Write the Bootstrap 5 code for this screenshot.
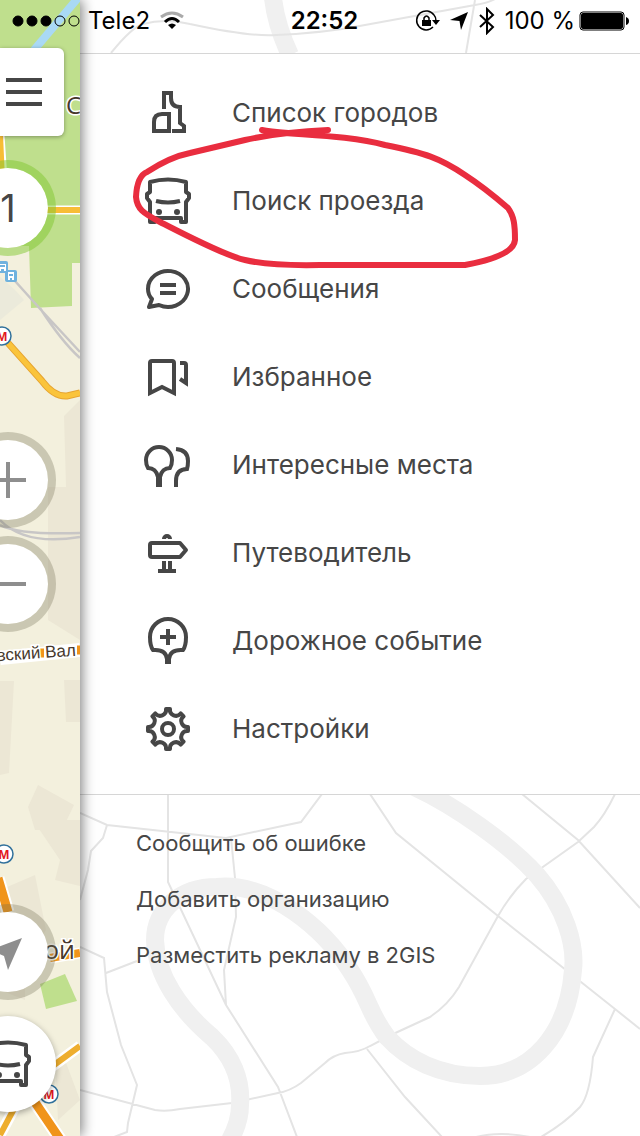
<!DOCTYPE html>
<html lang="ru">
<head>
<meta charset="utf-8">
<meta name="viewport" content="width=device-width, initial-scale=1">
<title>2GIS</title>
<link href="https://cdn.jsdelivr.net/npm/bootstrap@5.3.0/dist/css/bootstrap.min.css" rel="stylesheet">
<style>
  body { font-family: Inter, "Liberation Sans", sans-serif; color: #464646; background: #fff; }
  a { color: inherit; text-decoration: none; }
  .ink { fill: none; stroke: #464646; stroke-width: 4; }

  .status-bar { height: 42px; padding: 0 11px 0 12px; color: #000; font-size: 24px; line-height: 42px; z-index: 3; }
  .status-side { flex: 1 1 0; }
  .status-time { font-weight: 600; padding-left: 8px; }

  .map-strip { width: 80px; z-index: 2; padding: 48px 0 24px; background: #f3f0dd; box-shadow: 2px 0 12px rgba(0,0,0,.5); }
  .map-clip { inset: 0; }
  .map-control { position: relative; border: 0; background: #fff; padding: 0; display: flex; align-items: center; justify-content: center; }
  .menu-btn { width: 64px; height: 88px; border-radius: 0 6px 6px 0; box-shadow: 0 1px 4px rgba(0,0,0,.35); }
  .round-btn { width: 96px; height: 96px; margin-left: -40px; border-radius: 50%; border: 8px solid rgba(110,105,80,.3); background-clip: padding-box; }
  .round-btn.compass { border-color: rgba(130,200,50,.5); margin-top: 24px; font-size: 38px; color: #464646; }
  .round-btn.transit { border: 0; box-shadow: 0 2px 6px rgba(0,0,0,.35); }
  .zoom-group { margin-top: 176px; }

  .panel-head { height: 54px; border-bottom: 1px solid #d6d6d6; }
  .main-menu { padding: 15px 0 21px; }
  .menu-item { height: 88px; padding-left: 64px; gap: 40px; font-size: 26px; line-height: 32px; }
  .panel-foot { border-top: 1px solid #d6d6d6; padding: 20px 0 0 56px; }
  .foot-link { height: 56px; font-size: 22px; line-height: 28px; position: relative; }
  .backdrop { inset: 0; }
  .river { fill: none; stroke: #f0f0f0; stroke-width: 18; }
  .roads { fill: none; stroke: #e4e4e4; stroke-width: 2; }
  .marker-stroke { top: 0; left: 0; pointer-events: none; }
</style>
</head>
<body>
<div class="d-flex min-vh-100 position-relative overflow-hidden">

  <header class="status-bar position-absolute top-0 start-0 w-100 d-flex align-items-center">
    <div class="status-side d-flex align-items-center">
      <svg width="68" height="12" viewBox="0 0 68 12" aria-hidden="true"><g stroke="#000" stroke-width="1"><circle cx="6" cy="6" r="5"/><circle cx="20" cy="6" r="5"/><circle cx="34" cy="6" r="5"/><circle cx="48" cy="6" r="5" fill="none"/><circle cx="62" cy="6" r="5" fill="none"/></g></svg>
      <span class="ms-2">Tele2</span>
      <svg class="ms-2" width="28" height="20" viewBox="0 0 28 20" aria-hidden="true"><path d="M3 6Q14-2 25 6" fill="none" stroke="#aaa" stroke-width="3"/><path d="M7 11Q14 4 21 11" fill="none" stroke="#000" stroke-width="3"/><path d="M10 14Q14 11 18 14L14 18Z"/></svg>
    </div>
    <div class="status-time">22:52</div>
    <div class="status-side d-flex align-items-center justify-content-end">
      <svg width="26" height="24" viewBox="0 0 26 24" aria-hidden="true"><path d="M19 6A9.500 9.500 0 1 0 18 18M19 6Q21 8 21 12" fill="none" stroke="#000" stroke-width="1.500"/><path d="M17 11H25L21 16ZM7 11H16V17H7Z"/><path d="M9 12V9Q11.500 5 14 9V12" fill="none" stroke="#000" stroke-width="1.500"/></svg>
      <svg class="ms-2" width="20" height="20" viewBox="0 0 20 20" aria-hidden="true"><path d="M1 9L19 1L12 19L10.500 10Z"/></svg>
      <svg class="ms-2" width="20" height="28" viewBox="0 0 20 28" aria-hidden="true"><path d="M3 8L16 20L10 26V2L16 8L3 20" fill="none" stroke="#000" stroke-width="2"/></svg>
      <span class="ms-2">100 %</span>
      <svg class="ms-1" width="50" height="20" viewBox="0 0 50 20" aria-hidden="true"><rect x="1" y="1" width="44" height="18" rx="3" fill="none" stroke="#000"/><rect x="2" y="2" width="42" height="16" rx="2"/><path d="M47 6Q50 7 50 10T47 14Z"/></svg>
    </div>
  </header>

  <aside class="map-strip position-relative flex-shrink-0 d-flex flex-column">
    <div class="map-clip position-absolute overflow-hidden">
      <svg width="100%" height="100%" viewBox="0 0 80 1136" preserveAspectRatio="xMinYMin slice" aria-hidden="true">
        <path d="M0 277L15 290L24 300L0 320Z" fill="#ebeadb"/>
        <path d="M80 400L64 416L66 487H48V620L80 640ZM0 681H14L9 773L0 775ZM64 680H80V722H66ZM38 785L74 805L62 830H35L28 807ZM33 820H80V886L55 880L60 860ZM0 890L35 875L46 930L25 965V1000L0 990ZM55 1060L65 1060L80 1100L58 1120Z" fill="#ece7d5"/>
        <path d="M0 0H80V263H72V306L31 308L29 246H0Z" fill="#bfdf8d"/>
        <path d="M34 50L78-2" stroke="#a9d9f5" stroke-width="8"/>
        <path d="M0 135L3 180M40 210H80" stroke="#fff" stroke-width="9"/>
        <path d="M0 135L2 180M40 210H80" stroke="#f7bd36" stroke-width="6"/>
        <path d="M15 281L42 311L80 352M40 308Q62 342 80 358M0 525Q20 535 80 533M0 520Q25 546 80 537" fill="none" stroke="#c8c6c6" stroke-width="2.500"/>
        <path d="M8 343L42 381Q54 397 67 396L80 393" fill="none" stroke="#e6a431" stroke-width="7"/>
        <path d="M8 343L42 381Q54 397 67 396L80 393" fill="none" stroke="#fac43b" stroke-width="5"/>
        <path d="M0 658L80 650" stroke="#fff" stroke-width="14"/>
        <path d="M40 653H44M77 650H80" stroke="#f0941b" stroke-width="9"/>
        <path d="M-2 878L8 912M30 1095L64 1145" stroke="#fff" stroke-width="13"/>
        <path d="M-2 878L8 912M30 1095L64 1145" stroke="#f0941b" stroke-width="9"/>
        <path d="M50 958L80 953M50 1068L80 1046M0 1135L16 1105" stroke="#fff" stroke-width="11"/>
        <path d="M50 1068L80 1046M0 1135L16 1105" stroke="#eeae2e" stroke-width="6"/>
        <path d="M50 958L80 953" stroke="#f0941b" stroke-width="8"/>
        <path d="M40 984L65 974L77 1001L46 1009Z" fill="#bfdf8d"/>
        <g font-family="Open Sans, sans-serif" fill="#46382c" stroke="#fff" stroke-width="3" paint-order="stroke">
          <text x="66" y="114" font-size="24">С</text>
          <text x="44" y="959" font-size="25">ой</text>
          <text x="-3" y="661" font-size="17" font-family="Liberation Sans, sans-serif" transform="rotate(-4 0 661)">вский Вал</text>
        </g>
        <g fill="#6fb2de"><rect x="-4" y="261" width="12" height="12" rx="2"/><rect x="5" y="270" width="12" height="12" rx="2"/></g>
        <g fill="#fff"><path d="M-1 264H6V271H4V269H1V271H-1ZM8 272H14V280H12V278H10V280H8Z"/></g>
        <path d="M0 266H5M9 275H13" stroke="#6fb2de" stroke-width="2"/>
        <g fill="#fff" stroke="#31719c" stroke-width="1.500"><circle cx="2" cy="336" r="9"/><circle cx="4" cy="854" r="9"/><circle cx="49" cy="1094" r="9"/></g>
        <g fill="#e21a22" font-family="Liberation Sans, sans-serif" font-weight="700" font-size="13" text-anchor="middle"><text x="2" y="341">М</text><text x="4" y="859">М</text><text x="49" y="1099">М</text></g>
      </svg>
    </div>
    <button class="map-control menu-btn" type="button" aria-label="Меню">
      <svg class="me-3" width="36" height="28" viewBox="0 0 36 28"><path class="ink" d="M0 2H36M0 14H36M0 26H36"/></svg>
    </button>
    <button class="map-control round-btn compass" type="button">1</button>
    <div class="zoom-group d-flex flex-column gap-2">
      <button class="map-control round-btn" type="button" aria-label="Приблизить"><svg width="36" height="36" viewBox="0 0 36 36"><path d="M0 18H36M18 0V36" stroke="#8e8e8e" stroke-width="4"/></svg></button>
      <button class="map-control round-btn" type="button" aria-label="Отдалить"><svg width="36" height="36" viewBox="0 0 36 36"><path d="M0 18H36" stroke="#8e8e8e" stroke-width="4"/></svg></button>
    </div>
    <div class="mt-auto d-flex flex-column gap-3">
      <button class="map-control round-btn" type="button" aria-label="Моё местоположение"><svg width="36" height="36" viewBox="0 0 36 36"><path d="M0 16L32 4L18 36L14 22Z" fill="#8e8e8e"/></svg></button>
      <button class="map-control round-btn transit" type="button" aria-label="Проезд"><svg width="48" height="48" viewBox="0 0 48 48"><use href="#bus"/></svg></button>
    </div>
  </aside>

  <main class="flex-grow-1 d-flex flex-column">
    <div class="panel-head position-relative overflow-hidden">
      <svg class="position-absolute start-0 top-0 w-100 h-100" viewBox="80 0 560 53" preserveAspectRatio="xMinYMin slice" aria-hidden="true">
        <path class="river" d="M273-2Q276 25 290 55"/>
        <path class="roads" d="M111 53Q132 27 143 24Q165 18 190 24Q250 37 276 35Q325 33 365 25L475 5Q488 3 495-1M475 0L466 53"/>
      </svg>
    </div>

    <nav class="main-menu position-relative" aria-label="Главное меню">
      <a href="#" class="menu-item d-flex align-items-center"><svg width="48" height="48" viewBox="0 0 48 48"><path class="ink" d="M20 20V4H27V9C27 15 30 18 36 18V34L40 37V42H28M10 42V33Q10 25 18 25H25V42Z"/></svg><span>Список городов</span></a>
      <a href="#" class="menu-item d-flex align-items-center"><svg width="48" height="48" viewBox="0 0 48 48"><g id="bus"><path class="ink" stroke-linejoin="round" d="M6 15V5Q24 0 42 5V15L45 17V21L42 25V45H37V41H11V45H6V25L3 21V17ZM12 24Q24 27 36 24"/><g fill="#464646"><circle cx="15" cy="35" r="3"/><circle cx="33" cy="35" r="3"/></g></g></svg><span>Поиск проезда</span></a>
      <a href="#" class="menu-item d-flex align-items-center"><svg width="48" height="48" viewBox="0 0 48 48"><path class="ink" stroke-linejoin="round" d="M8 34Q4 30 4 24A20 18 0 1 1 15 40L5 42ZM16 20H32M16 28H32"/></svg><span>Сообщения</span></a>
      <a href="#" class="menu-item d-flex align-items-center"><svg width="48" height="48" viewBox="0 0 48 48"><path class="ink" d="M6 40V10Q6 8 8 8H28Q30 8 30 10V40L18 34ZM36 10H40Q42 10 42 12V30L36 26"/></svg><span>Избранное</span></a>
      <a href="#" class="menu-item d-flex align-items-center"><svg width="48" height="48" viewBox="0 0 48 48"><path class="ink" d="M14 46V36Q12 27 4 27Q2 24 2 19A13 13 0 0 1 28 19Q28 24 26 27Q18 27 16 36V46M32 8Q44 9 44 20Q44 25 43 28C35 28 32 33 32 40V46"/></svg><span>Интересные места</span></a>
      <a href="#" class="menu-item d-flex align-items-center"><svg width="48" height="48" viewBox="0 0 48 48"><path class="ink" stroke-linejoin="round" d="M8 14H36L42 21L36 28H8Q6 28 6 26V16Q6 14 8 14ZM20 10A3 3 0 0 1 26 10M20 32V42M26 32V42M14 42H32"/></svg><span>Путеводитель</span></a>
      <a href="#" class="menu-item d-flex align-items-center"><svg width="48" height="48" viewBox="0 0 48 48"><path class="ink" d="M23 47V42Q22 32 9 33Q6 29 6 20A18 18 0 0 1 42 20Q42 29 39 33Q26 32 25 42V47M16 20H32M24 12V28"/></svg><span>Дорожное событие</span></a>
      <a href="#" class="menu-item d-flex align-items-center"><svg width="48" height="48" viewBox="0 0 48 48"><path class="ink" stroke-linejoin="round" d="M22 4H26A6 6 0 0 0 36.700 8.400L39.600 11.300A6 6 0 0 0 44 22V26A6 6 0 0 0 39.600 36.700L36.700 39.600A6 6 0 0 0 26 44H22A6 6 0 0 0 11.300 39.600L8.400 36.700A6 6 0 0 0 4 26V22A6 6 0 0 0 8.400 11.300L11.300 8.400A6 6 0 0 0 22 4Z"/><circle class="ink" cx="24" cy="24" r="6"/></svg><span>Настройки</span></a>
      <svg class="marker-stroke position-absolute" width="460" height="230" viewBox="80 54 460 230" aria-hidden="true">
        <path d="M262 130C285 135 345 134 385 145C425 153 440 158 465 175Q485 188 508 208C514 216 515 225 515 240Q514 256 465 265H320Q270 266 245 260C225 256 180 232 160 222C143 213 137 209 136 197Q137 176 147 172Q170 157 190 153L245 140Q280 132 328 130" fill="none" stroke="#e92d3f" stroke-width="6" stroke-linecap="round" stroke-linejoin="round"/>
      </svg>
    </nav>

    <footer class="panel-foot position-relative flex-grow-1">
      <div class="backdrop position-absolute overflow-hidden">
        <svg width="100%" height="100%" viewBox="80 795 560 341" preserveAspectRatio="xMinYMin slice" aria-hidden="true">
          <path class="roads" d="M80 813L107 825L226 838L301 822L322 794M107 825L103 838L91 851L88 870L80 900M168 794V882L226 1005L278 1087L297 1137M231 838L235 878L236 917L224 970L226 1005M80 947L104 958L107 992L121 1045L137 1085L128 1123L127 1132L114 1137M106 973L137 961M80 1090L155 1110Q166 1112 180 1109L232 1103L278 1093Q290 1091 301 1083L325 1063Q333 1055 345 1053Q360 1052 370 1046L391 1035L430 1017Q448 1005 459 987L498 916Q510 895 526 879L578 842L594 827Q605 815 615 794M367 1049L405 1097L442 1137M370 794L396 833L498 916L615 1009L640 1029M522 794L578 840L640 908M615 1009L593 1057Q590 1095 580 1107Q565 1123 541 1137M476 1137Q500 1131 530 1137"/>
          <path class="river" d="M410 785C455 805 510 845 537 875C565 907 576 945 573 970C568 1035 530 1076 480 1076C440 1076 408 1060 387 1037C368 1012 370 1000 350 970C325 930 270 882 217 887C180 887 155 910 155 940C156 975 180 1010 212 1037C232 1056 242 1080 240 1105Q240 1122 230 1140"/>
        </svg>
      </div>
      <a href="#" class="foot-link d-flex align-items-center">Сообщить об ошибке</a>
      <a href="#" class="foot-link d-flex align-items-center">Добавить организацию</a>
      <a href="#" class="foot-link d-flex align-items-center">Разместить рекламу в 2GIS</a>
    </footer>
  </main>
</div>
<script src="https://cdn.jsdelivr.net/npm/bootstrap@5.3.0/dist/js/bootstrap.bundle.min.js"></script>
</body>
</html>
